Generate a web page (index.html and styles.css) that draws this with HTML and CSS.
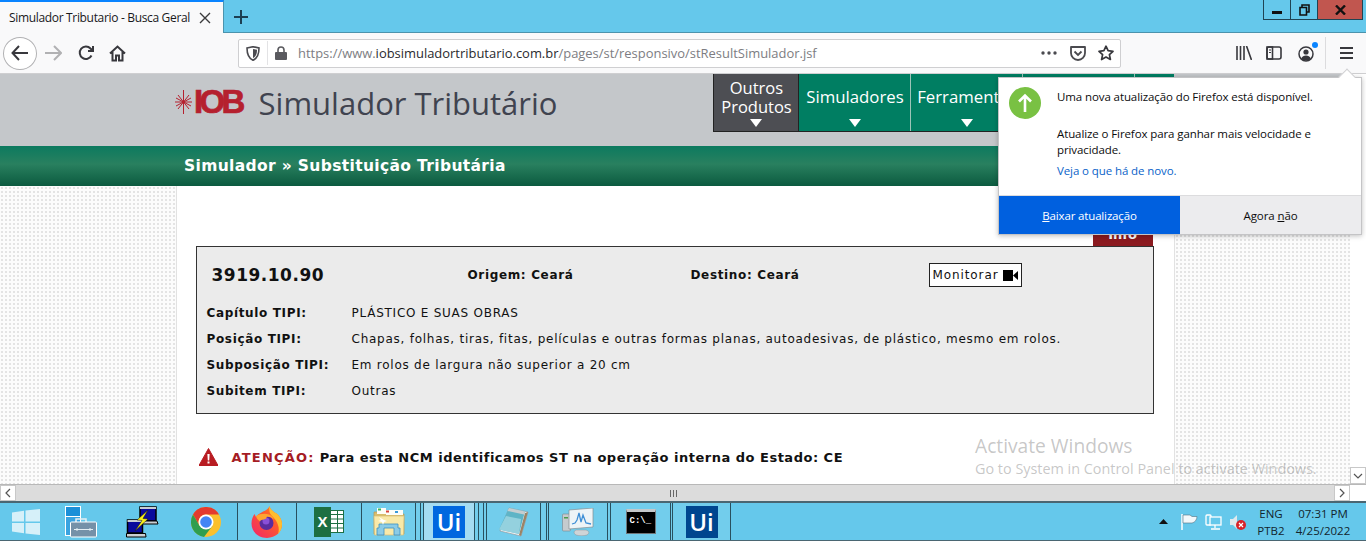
FILE: index.html
```html
<!DOCTYPE html>
<html lang="pt-BR">
<head>
  <meta charset="UTF-8" />
  <title>Simulador Tributario - Busca Geral</title>
  <link rel="stylesheet" href="styles.css">
</head>
<body>
  <div class="titlebar">
    <div class="tab">
      <span class="tab-title">Simulador Tributario - Busca Geral</span>
      <svg class="tab-close" width="12" height="12" viewBox="0 0 12 12"><path d="M1 1l10 10M11 1L1 11" stroke="#3a3a3c" stroke-width="1.4"/></svg>
    </div>
    <svg class="new-tab" width="14" height="14" viewBox="0 0 14 14"><path d="M7 0v14M0 7h14" stroke="#1c3f52" stroke-width="2"/></svg>
    <div class="win-buttons">
      <div class="win-btn"><svg width="10" height="10" viewBox="0 0 10 10"><rect x="0" y="6" width="10" height="3" fill="#111"/></svg></div>
      <div class="win-btn"><svg width="11" height="12" viewBox="0 0 11 12"><path d="M3 3V1h7v7H8M1 3.500h6.500v7.500H1z" fill="none" stroke="#111" stroke-width="1.600"/></svg></div>
      <div class="win-btn close"><svg width="11" height="10" viewBox="0 0 11 10"><path d="M1 0.500l9 9M10 0.500l-9 9" stroke="#111" stroke-width="2.400"/></svg></div>
    </div>
  </div>

  <div class="toolbar">
    <div class="back"><svg width="18" height="16" viewBox="0 0 18 16"><path d="M8 1L1.500 8 8 15M2 8h15" fill="none" stroke="#38383d" stroke-width="2"/></svg></div>
    <svg class="forward" width="17" height="16" viewBox="0 0 17 16"><path d="M9 1l7 7-7 7M15 8H0" fill="none" stroke="#b1b1b3" stroke-width="2"/></svg>
    <svg class="reload" width="16" height="16" viewBox="0 0 16 16"><path d="M13.500 10.500A6.200 6.200 0 1 1 12.500 3.500L14.500 5.500M15 1v5h-5" fill="none" stroke="#38383d" stroke-width="2"/></svg>
    <svg class="home" width="17" height="17" viewBox="0 0 17 17"><path d="M1 8.500L8.500 1.500 16 8.500M3.500 7v8.500h3.500v-5h3v5h3.500V7" fill="none" stroke="#38383d" stroke-width="2"/></svg>
    <div class="urlbar">
      <svg class="shield" width="14" height="15" viewBox="0 0 14 15"><path d="M1 2l6-1.300L13 2c0 6-1 10-6 12.300C2 12 1 8 1 2z" fill="none" stroke="#4a4a4f" stroke-width="1.600"/><path d="M7 3l4 .8c0 4-.8 6.500-4 8.200z" fill="#4a4a4f"/></svg>
      <span class="url-sep"></span>
      <svg class="lock" width="12" height="14" viewBox="0 0 12 14"><path d="M3 6V4a3 3 0 0 1 6 0v2" fill="none" stroke="#5a5a5f" stroke-width="1.600"/><rect x="0" y="6" width="12" height="8" rx="1" fill="#5a5a5f"/></svg>
      <span class="url"><span class="url-dim">https://www.</span><span class="url-host">iobsimuladortributario.com.br</span><span class="url-dim">/pages/st/responsivo/stResultSimulador.jsf</span></span>
      <svg class="url-dots" width="16" height="4" viewBox="0 0 16 4"><circle cx="2" cy="2" r="1.700" fill="#4a4a4f"/><circle cx="8" cy="2" r="1.700" fill="#4a4a4f"/><circle cx="14" cy="2" r="1.700" fill="#4a4a4f"/></svg>
      <svg class="pocket" width="16" height="15" viewBox="0 0 16 15"><path d="M1 1h14v6a7 7 0 0 1-14 0z" fill="none" stroke="#4a4a4f" stroke-width="1.800" stroke-linejoin="round"/><path d="M4.500 5.500L8 9l3.500-3.500" fill="none" stroke="#4a4a4f" stroke-width="1.800"/></svg>
      <svg class="star" width="16" height="16" viewBox="0 0 16 16"><path d="M8 1.200l2.100 4.500 4.900.6-3.600 3.400 1 4.800L8 12.100l-4.400 2.400 1-4.800L1 6.300l4.900-.6z" fill="none" stroke="#38383d" stroke-width="1.700" stroke-linejoin="round"/></svg>
    </div>
    <svg class="library" width="16" height="14" viewBox="0 0 16 14"><path d="M1 0v14M4.500 0v14M8 0v14M10.500 0l5 14" fill="none" stroke="#38383d" stroke-width="1.600"/></svg>
    <svg class="sidebar" width="16" height="14" viewBox="0 0 16 14"><rect x="1" y="1" width="14" height="12" rx="2" fill="none" stroke="#38383d" stroke-width="1.600"/><rect x="1" y="1" width="5.500" height="12" fill="none" stroke="#38383d" stroke-width="1.600"/><path d="M3 4h2M3 6.500h2" stroke="#38383d"/></svg>
    <div class="account">
      <svg width="16" height="16" viewBox="0 0 16 16"><circle cx="8" cy="8" r="7" fill="none" stroke="#38383d" stroke-width="1.500"/><circle cx="8" cy="6" r="2.600" fill="#38383d"/><path d="M3 13c1-3 3-3.500 5-3.500s4 .5 5 3.500c-3 2-7 2-10 0z" fill="#38383d"/></svg>
      <span class="account-dot"></span>
    </div>
    <span class="tool-sep"></span>
    <svg class="menu" width="13" height="12" viewBox="0 0 13 12"><path d="M0 1h13M0 6h13M0 11h13" stroke="#38383d" stroke-width="1.800"/></svg>
  </div>

  <div class="viewport">
    <div class="page">
      <header class="site-head">
        <svg class="burst" width="17" height="24" viewBox="0 0 17 24"><path d="M8.500 0v24M0 12h17M3 5l11 14M14 5L3 19M1 8l15 8M16 8L1 16" stroke="#b5202e" stroke-width="1"/></svg>
        <span class="logo-iob">IOB</span>
        <span class="logo-name">Simulador Tributário</span>
        <nav class="site-nav">
          <a class="nav-item dark"><span>Outros<br>Produtos</span><i></i></a>
          <a class="nav-item"><span>Simuladores</span><i></i></a>
          <a class="nav-item"><span>Ferramentas</span><i></i></a>
          <a class="nav-item"></a>
          <a class="nav-item end"></a>
        </nav>
      </header>
      <div class="band"><h1>Simulador » Substituição Tributária</h1></div>
      <div class="columns">
        <div class="dots"></div>
        <main class="content">
          <div class="info-row"><span class="info-tab">Info</span></div>
          <section class="ncm-box">
            <div class="ncm-head">
              <strong class="ncm-code">3919.10.90</strong>
              <strong>Origem: Ceará</strong>
              <strong>Destino: Ceará</strong>
              <span class="monitor">Monitorar
                <svg width="15" height="11" viewBox="0 0 15 11"><rect x="0" y="0" width="10" height="11" fill="#000"/><path d="M10 5.500L15 1v9z" fill="#000"/></svg>
              </span>
            </div>
            <div class="ncm-rows">
              <b>Capítulo TIPI:</b><span>PLÁSTICO E SUAS OBRAS</span>
              <b>Posição TIPI:</b><span>Chapas, folhas, tiras, fitas, películas e outras formas planas, autoadesivas, de plástico, mesmo em rolos.</span>
              <b>Subposição TIPI:</b><span>Em rolos de largura não superior a 20 cm</span>
              <b>Subitem TIPI:</b><span>Outras</span>
            </div>
          </section>
          <p class="alert">
            <svg width="19" height="18" viewBox="0 0 19 18"><path d="M9.500 0.500L19 17.500H0z" fill="#b81c22" stroke="#b81c22" stroke-linejoin="round"/><path d="M8.400 6h2.200l-.4 6.500H8.800z" fill="#fff"/><rect x="8.500" y="13.500" width="2" height="2" fill="#fff"/></svg>
            <span class="alert-label">ATENÇÃO:</span>
            <span>Para esta NCM identificamos ST na operação interna do Estado: CE</span>
          </p>
        </main>
        <div class="dots"></div>
      </div>
    </div>
    <div class="vscroll">
      <div class="scroll-btn"><svg width="10" height="6" viewBox="0 0 10 6"><path d="M1 1l4 4 4-4" fill="none" stroke="#555" stroke-width="1.200"/></svg></div>
    </div>
  </div>

  <div class="hscroll">
    <div class="scroll-btn h"><svg width="6" height="10" viewBox="0 0 6 10"><path d="M5 1L1 5l4 4" fill="none" stroke="#555" stroke-width="1.200"/></svg></div>
    <div class="hscroll-track"><svg width="7" height="7" viewBox="0 0 7 7"><path d="M0.500 0v7M3.500 0v7M6.500 0v7" stroke="#666"/></svg></div>
    <div class="scroll-btn h"><svg width="6" height="10" viewBox="0 0 6 10"><path d="M1 1l4 4-4 4" fill="none" stroke="#555" stroke-width="1.200"/></svg></div>
    <div class="hscroll-corner"></div>
  </div>

  <footer class="taskbar">
    <div class="task w52"><svg width="28" height="26" viewBox="0 0 28 26"><path d="M0 3.500l12-1.700V12.500H0zM13.500 1.600L28 0v12.500H13.500zM0 14h12v10.200L0 22.500zM13.500 14H28v12l-14.500-1.600z" fill="#d6f0f9"/></svg></div>
    <div class="task w63 nudge"><svg width="32" height="32" viewBox="0 0 32 32"><rect x="0.500" y="0.500" width="15" height="29" fill="#3aa3e0" stroke="#fff"/><path d="M1 10.500h14" stroke="#fff"/><rect x="1" y="1" width="14" height="9" fill="#1b8fd8"/><path d="M11 16v-3h10v3" fill="none" stroke="#e4eef3" stroke-width="1.500"/><rect x="5.500" y="16" width="26" height="15" rx="1" fill="#7591a8" stroke="#fff"/><path d="M9 23.500h19" stroke="#e4eef3"/><path d="M12 22v3M25 22v3" stroke="#e4eef3"/></svg></div>
    <div class="task w60 nudge"><svg width="33" height="32" viewBox="0 0 33 32"><rect x="14" y="1" width="16" height="14" fill="#0a0a9c" stroke="#000" stroke-width="1.500"/><rect x="14" y="1" width="16" height="2" fill="#c9ced2"/><path d="M12 15h19l1 3H13z" fill="#c9ced2" stroke="#000"/><rect x="1.500" y="14" width="15" height="13" fill="#0a0a9c" stroke="#000" stroke-width="1.500"/><rect x="1.500" y="14" width="15" height="2" fill="#c9ced2"/><path d="M0.500 27.500h19l.5 3.500H0.500z" fill="#c9ced2" stroke="#000"/><path d="M22 4L11 14l5 .5L9 25l13-12-5-.5z" fill="#f8ef1c" stroke="#111" stroke-width=".5"/></svg></div>
    <div class="task w62"><svg width="30" height="30" viewBox="0 0 30 30"><circle cx="15" cy="15" r="15" fill="#fbc02d"/><path d="M2 7.500A15 15 0 0 1 28 7.500H15a7.500 7.500 0 0 0-6.500 11.250z" fill="#e33b2e"/><path d="M2 7.500A15 15 0 0 0 13 29.900l8.500-11.150H8.500z" fill="#2f9e4f"/><circle cx="15" cy="15" r="7.500" fill="#fff"/><circle cx="15" cy="15" r="5.800" fill="#4285f4"/></svg></div>
    <div class="task w59 sep">
      <svg width="32" height="32" viewBox="0 0 32 32">
        <defs>
          <linearGradient id="foxBody" x1="0" y1="1" x2="1" y2="0"><stop offset="0" stop-color="#f0236e"/><stop offset="0.6" stop-color="#ff5a2c"/><stop offset="1" stop-color="#ff9a1f"/></linearGradient>
        </defs>
        <path d="M18.500 0c.5 3 2.500 4 5 6.500 3 1 7 5 7.500 11C31.500 25.500 25 32 16 32 7 32 .5 25.500.5 17.500c0-4 1.500-7.500 3-9.500l1.500 3c1-1.500 3-3.500 5.500-4.500C13 5 17 4 18.500 0z" fill="url(#foxBody)"/>
        <path d="M18.500 0c.5 3 2.500 4 5 6.500 3 1 7 5 7.500 11 .2 4-1.500 8-4 10.500 1-3 1-6 0-9-1-4-4-7-6-9-2-2-3.500-5-2.500-10z" fill="#ffbd2f"/>
        <circle cx="15.500" cy="17" r="7" fill="#5a2c9e"/>
        <circle cx="15" cy="15" r="3.500" fill="#8a4fd8"/>
        <path d="M5 10c3-2 9-3 13-1.500 3 1 4.500 3 4.500 5-2-2.500-5-3-7-2.500.5 1-.5 2-3 2.500-1 .2-3 .5-3.500 2C7 14 5.500 12.500 5 10z" fill="#ffa430"/>
      </svg>
    </div>
    <div class="task w65 sep"><div class="xl-icon"><span class="xl-x">X</span><svg width="13" height="23" viewBox="0 0 13 23"><rect x="0" y="0" width="13" height="23" fill="#fff"/><path d="M0 4.500h13M0 9h13M0 13.500h13M0 18h13M6.500 0v23M12.500 0v23M0 .5h13M0 22.500h13" stroke="#1d6f42"/></svg></div></div>
    <div class="task w54 sep">
      <svg width="32" height="29" viewBox="0 0 32 29">
        <path d="M1 5h11l1 2h18v20H1z" fill="#d9bd6c" stroke="#b89a55" stroke-width=".7"/>
        <rect x="4" y="1" width="9" height="6" fill="#fdfdf8"/><rect x="5" y="1.500" width="3" height="2" fill="#3cb556"/>
        <rect x="13" y="3" width="17" height="5" fill="#fdfdf8"/><rect x="13" y="3.500" width="3" height="2" fill="#d9443a"/><rect x="22" y="4" width="3" height="2" fill="#3a9ad9"/>
        <path d="M1 9h30l-.5 19H1.500z" fill="#f9e9a8" stroke="#d6bd78" stroke-width=".7"/>
        <path d="M4 28v-7h2v-4h19v4h2v7h-6v-7H11v7z" fill="#8bcbe6" stroke="#3d8fc0" stroke-width=".8"/>
        <path d="M6 10l2 3-3 1 4 1 1 3 1-3 3-1-3-1z" fill="#fff"/>
      </svg>
    </div>
    <div class="task w5 sep"></div>
    <div class="task w3 sep"></div>
    <div class="task w51 sep active"><span class="ui-icon bright">Ui</span></div>
    <div class="task w4 sep"></div>
    <div class="task w5 sep"></div>
    <div class="task w3 sep"></div>
    <div class="task w54 sep">
      <svg width="31" height="30" viewBox="0 0 31 30">
        <path d="M11 1l19 4-7 24L2 24z" fill="#f2f5f6" stroke="#8a8f92" stroke-width=".6"/>
        <path d="M30 5l-7 24-2-1 6-22z" fill="#9a8467"/>
        <path d="M11 1l16 3.500L21 27 1 22.500z" fill="#5fb4c6"/>
        <path d="M11 1l16 3.500-1 3L9.500 4z" fill="#c6cdd0"/>
        <path d="M8 9l15 3-2 15L1 22.500z" fill="#a6dbe6" opacity=".75"/>
      </svg>
    </div>
    <div class="task w6 sep"></div>
    <div class="task w2 sep"></div>
    <div class="task w59 sep">
      <svg width="32" height="28" viewBox="0 0 32 28">
        <rect x="0.500" y="6" width="8" height="17" rx="1" fill="#c6cbce" stroke="#7e8589" stroke-width=".6"/>
        <rect x="2" y="9" width="4" height="1.500" fill="#4c9a4c"/>
        <path d="M7 2l24-2v19L7 21z" fill="#eef4f7" stroke="#858c90" stroke-width=".7"/>
        <path d="M10 16l3-1 2-3 2-7 2 9 2-7 3 8 5 1" fill="none" stroke="#3f8fd6" stroke-width="1.300"/>
        <path d="M14 22h10c3 1 4 3 1 5-3 1-8 1-11 0-3-2-2-4 0-5z" fill="#cfd4d7" stroke="#8e9498" stroke-width=".5"/>
      </svg>
    </div>
    <div class="task w3 sep"></div>
    <div class="task w60 sep"><div class="cmd-icon">C:\_</div></div>
    <div class="task w2 sep"></div>
    <div class="task w59 sep end"><span class="ui-icon deep">Ui</span></div>
    <div class="tray">
      <svg class="tray-arrow" width="9" height="5" viewBox="0 0 9 5"><path d="M4.500 0L9 5H0z" fill="#111"/></svg>
      <svg width="17" height="16" viewBox="0 0 17 16"><path d="M1 0v16" stroke="#fff" stroke-width="1.500"/><path d="M2 1h7l2 1.500h5c0 3-2 6-5 6.500H2z" fill="#f2f8fb" stroke="#53717f" stroke-width=".6"/></svg>
      <svg width="17" height="16" viewBox="0 0 17 16"><rect x="1" y="1" width="5" height="10" rx="1" fill="none" stroke="#fff" stroke-width="1.300"/><rect x="5" y="3" width="11" height="8" fill="#65c8eb" stroke="#fff" stroke-width="1.300"/><path d="M10 11v3M6 15h9" stroke="#fff" stroke-width="1.300"/></svg>
      <svg width="17" height="16" viewBox="0 0 17 16"><path d="M1 5h3l4-4v14l-4-4H1z" fill="#dfe9ee"/><circle cx="12" cy="11" r="5" fill="#d8232a"/><path d="M10 9l4 4M14 9l-4 4" stroke="#fff" stroke-width="1.200"/></svg>
      <div class="tray-text lang">ENG<br>PTB2</div>
      <div class="tray-text clock">07:31 PM<br>4/25/2022</div>
    </div>
  </footer>

  <div class="update-popup">
    <span class="popup-arrow"></span>
    <div class="popup-body">
      <svg class="popup-icon" width="32" height="32" viewBox="0 0 32 32"><circle cx="16" cy="16" r="16" fill="#79c143"/><path d="M16 25V9M10 14.500L16 8.500l6 6" fill="none" stroke="#fff" stroke-width="2.600"/></svg>
      <div class="popup-text">
        <p class="popup-first">Uma nova atualização do Firefox está disponível.</p>
        <p class="popup-second">Atualize o Firefox para ganhar mais velocidade e privacidade.</p>
        <a class="popup-link">Veja o que há de novo.</a>
      </div>
    </div>
    <div class="popup-actions">
      <button class="popup-btn primary"><u>B</u>aixar atualização</button>
      <button class="popup-btn">Agora <u>n</u>ão</button>
    </div>
  </div>

  <div class="activate">
    <div class="activate-big">Activate Windows</div>
    <div class="activate-small">Go to System in Control Panel to activate Windows.</div>
  </div>
</body>
</html>
```

FILE: styles.css
```css
* {
  box-sizing: border-box;
}
html, body {
  margin: 0;
  height: 541px;
  overflow: hidden;
}
body {
  width: 1366px;
  display: flex;
  flex-direction: column;
  position: relative;
  font-family: "Open Sans", sans-serif;
  background: #fff;
}

/* browser chrome */
.titlebar {
  height: 33px;
  background: #65c8eb;
  border-bottom: 1px solid #4b93ad;
  display: flex;
  align-items: flex-start;
  flex: none;
}
.tab {
  width: 224px;
  height: 33px;
  background: #f9f9fa;
  border-top: 2px solid #0a84ff;
  border-right: 1px solid #4b93ad;
  display: flex;
  align-items: center;
  padding: 0 12px 0 9px;
  justify-content: space-between;
}
.tab-title {
  font-size: 12px;
  letter-spacing: -0.33px;
  color: #18181a;
  white-space: nowrap;
}
.new-tab {
  margin: 10px 0 0 10px;
}
.win-buttons {
  margin-left: auto;
  margin-right: 3px;
  display: flex;
  height: 20px;
  border: 1px solid #1f4454;
  border-top: 0;
}
.win-btn {
  width: 27px;
  display: flex;
  align-items: center;
  justify-content: center;
  border-right: 1px solid #1f4454;
}
.win-btn.close {
  width: 44px;
  background: #c1564f;
  border-right: 0;
}
.toolbar {
  height: 41px;
  background: #f9f9fa;
  border-bottom: 1px solid #cfcfd1;
  display: flex;
  align-items: center;
  flex: none;
}
.back {
  width: 34px;
  height: 33px;
  margin-left: 3px;
  border: 1px solid #b1b1b3;
  border-radius: 50%;
  background: #fff;
  display: flex;
  align-items: center;
  justify-content: center;
}
.forward {
  margin-left: 8px;
}
.reload {
  margin-left: 16px;
}
.home {
  margin-left: 15px;
}
.urlbar {
  width: 883px;
  height: 29px;
  margin-left: 112px;
  background: #fff;
  border: 1px solid #cfcfd1;
  border-radius: 2px;
  display: flex;
  align-items: center;
  padding-left: 7px;
}
.url-sep {
  width: 1px;
  height: 24px;
  background: #e3e3e5;
  margin: 0 7px 0 7px;
}
.lock {
  margin-right: 11px;
}
.url {
  font-size: 12.950px;
  white-space: nowrap;
  flex: 1;
}
.url-dim {
  color: #7d7d82;
}
.url-host {
  color: #2a2a2e;
}
.url-dots {
  margin-right: 13px;
}
.pocket {
  margin-right: 12px;
}
.star {
  margin-right: 6px;
}
.library {
  margin-left: 115px;
}
.sidebar {
  margin-left: 14px;
}
.account {
  margin-left: 16px;
  position: relative;
  height: 16px;
}
.account-dot {
  position: absolute;
  top: -3px;
  right: -4px;
  width: 6px;
  height: 6px;
  border-radius: 50%;
  background: #0a84ff;
}
.tool-sep {
  width: 1px;
  height: 32px;
  background: #dcdcde;
  margin-left: 11px;
}
.menu {
  margin-left: 14px;
}

/* page */
.viewport {
  height: 410px;
  display: flex;
  flex: none;
}
.page {
  width: 1350px;
  overflow: hidden;
}
.site-head {
  height: 72px;
  background: #c4c7ca;
  display: flex;
  padding-left: 175px;
}
.burst {
  margin-top: 16px;
}
.logo-iob {
  font-family: "Liberation Sans", sans-serif;
  font-weight: bold;
  font-size: 33px;
  letter-spacing: -3.7px;
  color: #b5202e;
  line-height: 36px;
  margin: 10px 0 0 2px;
  -webkit-text-stroke: 0.7px #b5202e;
}
.logo-name {
  font-size: 31px;
  color: #40434f;
  line-height: 36px;
  margin: 11px 0 0 17px;
  white-space: nowrap;
}
.site-nav {
  display: flex;
  margin-left: 156px;
  height: 58px;
  border-bottom: 1px solid #222;
}
.nav-item {
  width: 112px;
  height: 57px;
  background: #007e62;
  border-right: 1px solid #9cc4b8;
  color: #fff;
  font-size: 16.800px;
  line-height: 19px;
  text-align: center;
  display: flex;
  flex-direction: column;
  align-items: center;
  overflow: hidden;
  white-space: nowrap;
}
.nav-item span {
  display: block;
  margin: auto 0;
}
.nav-item.dark {
  width: 86px;
  background: #4d4e53;
  border-left: 1px solid #222;
  border-right: 1px solid #222;
  font-size: 16.500px;
}
.nav-item.dark span {
  padding-top: 1px;
}
.nav-item.end {
  width: 39px;
  border-right: 0;
}
.nav-item i {
  width: 0;
  height: 0;
  border-left: 6px solid transparent;
  border-right: 6px solid transparent;
  border-top: 8px solid #fff;
  margin: 0 0 4px;
}
.band {
  height: 40px;
  background: linear-gradient(#0c7a5f 0%, #29805f 45%, #0b5a3f 100%);
  padding-left: 184px;
}
.band h1 {
  margin: 0;
  color: #fff;
  font-family: "DejaVu Sans", sans-serif;
  font-size: 15.500px;
  letter-spacing: 0.35px;
  line-height: 41px;
  white-space: nowrap;
}
.columns {
  display: flex;
  height: 300px;
}
.dots {
  flex: 1;
  background-color: #fcfcfc;
  background-image: radial-gradient(#e2e2e2 0.7px, transparent 0.8px);
  background-size: 4px 4px;
}
.content {
  width: 999px;
  flex: none;
  background: #fff;
  border-left: 1px solid #e2e2e2;
  border-right: 1px solid #e2e2e2;
  padding: 38px 20px 0 19px;
  font-family: "DejaVu Sans", sans-serif;
  color: #111;
}
.info-row {
  display: flex;
  justify-content: flex-end;
  height: 22px;
}
.info-tab {
  width: 60px;
  margin-right: 1px;
  height: 22px;
  background: #8b1a1f;
  color: #fff;
  font-size: 13px;
  font-weight: bold;
  text-align: center;
  line-height: 22px;
}
.ncm-box {
  height: 168px;
  background: #ebebeb;
  border: 1px solid #333;
  font-size: 12px;
  letter-spacing: 0.75px;
}
.ncm-box strong,
.ncm-box b {
  letter-spacing: 0.65px;
}
.ncm-head {
  display: grid;
  grid-template-columns: 256px 223px 238px auto;
  align-items: center;
  height: 24px;
  margin-top: 16px;
  padding-left: 15px;
}
.ncm-box .ncm-code {
  font-size: 17px;
  letter-spacing: 0.5px;
}
.monitor {
  justify-self: start;
  display: flex;
  align-items: center;
  gap: 4px;
  height: 24px;
  width: 93px;
  padding-left: 3px;
  background: #fff;
  border: 1px solid #222;
  color: #111;
  letter-spacing: 0.9px;
}
.ncm-rows {
  display: grid;
  grid-template-columns: 145px 1fr;
  grid-auto-rows: 26px;
  align-items: center;
  margin-top: 13px;
  padding-left: 10px;
  white-space: nowrap;
}
.alert {
  display: flex;
  align-items: center;
  gap: 5px;
  margin: 34px 0 0 3px;
  font-size: 13px;
  font-weight: bold;
  letter-spacing: 0.5px;
  white-space: nowrap;
}
.alert svg {
  margin-right: 9px;
}
.alert span {
  padding-top: 1px;
}
.alert .alert-label {
  color: #a51c24;
  letter-spacing: 1.2px;
}
.vscroll {
  width: 16px;
  display: flex;
  align-items: flex-end;
  background: #fff;
}
.scroll-btn {
  width: 16px;
  height: 17px;
  background: #fff;
  border: 1px solid #c8c8c8;
  display: flex;
  align-items: center;
  justify-content: center;
}
.hscroll {
  height: 17px;
  display: flex;
  flex: none;
  border-top: 1px solid #b8b8b8;
  background: #dcdcdc;
}
.scroll-btn.h {
  height: 16px;
}
.hscroll-track {
  width: 1318px;
  padding-left: 654px;
  display: flex;
  align-items: center;
}
.hscroll-corner {
  width: 16px;
  background: #fff;
}

/* taskbar */
.taskbar {
  height: 40px;
  background: #65c8eb;
  border-top: 2px solid #4a6672;
  border-bottom: 1px solid #4a6672;
  display: flex;
  align-items: center;
  flex: none;
}
.task {
  height: 37px;
  display: flex;
  align-items: center;
  justify-content: center;
  flex: none;
}
.task.nudge svg {
  margin-right: 6px;
}
.task.sep {
  border-left: 1px solid #28505f;
  background: #72cdec;
}
.task.end {
  border-right: 1px solid #28505f;
}
.task.sep.active {
  background: #a4dcf2;
}
.w2 { width: 2px; }
.w3 { width: 3px; }
.w4 { width: 4px; }
.w5 { width: 5px; }
.w6 { width: 6px; }
.w51 { width: 51px; }
.w52 { width: 52px; }
.w54 { width: 54px; }
.w59 { width: 59px; }
.w60 { width: 60px; }
.w62 { width: 62px; }
.w63 { width: 63px; }
.w65 { width: 65px; }
.xl-icon {
  display: flex;
  align-items: center;
}
.xl-x {
  width: 17px;
  height: 30px;
  background: #1d6f42;
  color: #fff;
  font-family: "Liberation Sans", sans-serif;
  font-size: 15px;
  font-weight: bold;
  line-height: 30px;
  text-align: center;
}
.ui-icon {
  width: 32px;
  height: 32px;
  color: #fff;
  font-family: "Open Sans", sans-serif;
  font-size: 24px;
  font-weight: 600;
  line-height: 32px;
  text-align: center;
}
.ui-icon.bright {
  background: #0067df;
}
.ui-icon.deep {
  background: #00468f;
}
.cmd-icon {
  width: 30px;
  height: 25px;
  background: #000;
  border: 1px solid #6f7478;
  border-top: 3px solid #c4c8ca;
  color: #fff;
  font-family: "Liberation Mono", monospace;
  font-size: 9px;
  font-weight: bold;
  line-height: 12px;
  padding: 3px 0 0 3px;
}
.tray {
  flex: 1;
  display: flex;
  align-items: center;
  gap: 7px;
  padding-left: 428px;
}
.tray-arrow {
  margin-right: 6px;
}
.tray-text {
  font-family: "Open Sans", sans-serif;
  font-size: 11.500px;
  line-height: 17px;
  color: #12252d;
  text-align: center;
  white-space: nowrap;
}
.lang {
  width: 30px;
  margin-left: 3px;
}
.clock {
  width: 60px;
}

/* update doorhanger */
.update-popup {
  position: absolute;
  left: 998px;
  top: 77px;
  width: 364px;
  height: 158px;
  background: #fff;
  border: 1px solid #c4c4c6;
  box-shadow: 0 1px 5px rgba(0, 0, 0, 0.25);
  display: flex;
  flex-direction: column;
}
.popup-arrow {
  position: absolute;
  top: -7px;
  right: 8px;
  width: 12px;
  height: 12px;
  background: #fff;
  transform: rotate(45deg);
  border-left: 1px solid #d0d0d2;
  border-top: 1px solid #d0d0d2;
}
.popup-body {
  flex: 1;
  display: flex;
  padding: 9px 0 0 10px;
}
.popup-icon {
  flex: none;
}
.popup-text {
  margin: 2px 0 0 16px;
  font-size: 11.500px;
  letter-spacing: -0.1px;
  line-height: 16px;
  color: #0c0c0d;
}
.popup-text p {
  margin: 0;
}
.popup-second {
  width: 295px;
  padding-top: 21px;
}
.popup-link {
  display: block;
  margin-top: 5px;
  color: #0a63c9;
}
.popup-actions {
  display: flex;
  height: 39px;
  border-top: 1px solid #dcdcde;
}
.popup-btn {
  flex: 1;
  border: 0;
  padding: 0;
  background: #ececee;
  color: #0c0c0d;
  font-family: "Open Sans", sans-serif;
  font-size: 11.500px;
  letter-spacing: -0.1px;
}
.popup-btn.primary {
  flex: none;
  width: 181px;
  background: #0060df;
  color: #fff;
  letter-spacing: -0.15px;
}

.activate {
  position: absolute;
  left: 975px;
  top: 433px;
  color: rgba(120, 120, 120, 0.42);
  white-space: nowrap;
  pointer-events: none;
}
.activate-big {
  font-size: 19.200px;
  line-height: 26px;
}
.activate-small {
  font-size: 14.400px;
  line-height: 19px;
}
```
